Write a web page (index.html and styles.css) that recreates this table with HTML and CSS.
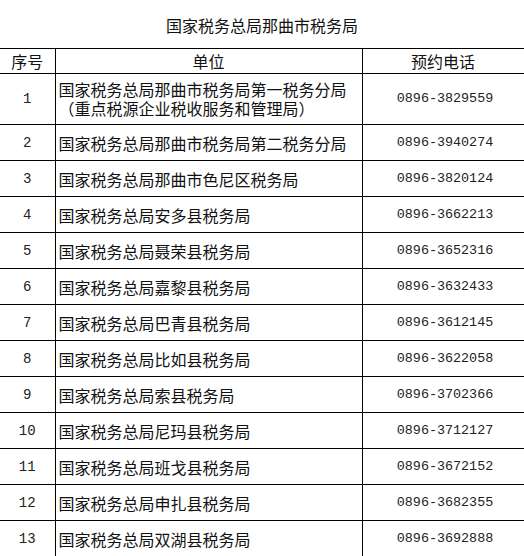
FILE: index.html
```html
<!DOCTYPE html>
<html lang="zh">
<head>
<meta charset="utf-8">
<link rel="stylesheet" href="styles.css">
</head>
<body>
<div class="page">
  <div class="title">国家税务总局那曲市税务局</div>
  <table class="grid">
    <colgroup>
      <col class="c-no">
      <col class="c-name">
      <col class="c-tel">
    </colgroup>
    <thead>
      <tr class="head"><th>序号</th><th>单位</th><th>预约电话</th></tr>
    </thead>
    <tbody>
      <tr class="tall"><td class="no">1</td><td class="name"><span class="ln">国家税务总局那曲市税务局第一税务分局</span><span class="ln">（重点税源企业税收服务和管理局）</span></td><td class="tel">0896-3829559</td></tr>
      <tr><td class="no">2</td><td class="name">国家税务总局那曲市税务局第二税务分局</td><td class="tel">0896-3940274</td></tr>
      <tr><td class="no">3</td><td class="name">国家税务总局那曲市色尼区税务局</td><td class="tel">0896-3820124</td></tr>
      <tr><td class="no">4</td><td class="name">国家税务总局安多县税务局</td><td class="tel">0896-3662213</td></tr>
      <tr><td class="no">5</td><td class="name">国家税务总局聂荣县税务局</td><td class="tel">0896-3652316</td></tr>
      <tr><td class="no">6</td><td class="name">国家税务总局嘉黎县税务局</td><td class="tel">0896-3632433</td></tr>
      <tr><td class="no">7</td><td class="name">国家税务总局巴青县税务局</td><td class="tel">0896-3612145</td></tr>
      <tr><td class="no">8</td><td class="name">国家税务总局比如县税务局</td><td class="tel">0896-3622058</td></tr>
      <tr><td class="no">9</td><td class="name">国家税务总局索县税务局</td><td class="tel">0896-3702366</td></tr>
      <tr><td class="no">10</td><td class="name">国家税务总局尼玛县税务局</td><td class="tel">0896-3712127</td></tr>
      <tr><td class="no">11</td><td class="name">国家税务总局班戈县税务局</td><td class="tel">0896-3672152</td></tr>
      <tr><td class="no">12</td><td class="name">国家税务总局申扎县税务局</td><td class="tel">0896-3682355</td></tr>
      <tr><td class="no">13</td><td class="name">国家税务总局双湖县税务局</td><td class="tel">0896-3692888</td></tr>
    </tbody>
  </table>
</div>
</body>
</html>
```

FILE: styles.css
```css
html, body {
  margin: 0;
  padding: 0;
  background: #fff;
}
body {
  font-family: "Noto Sans CJK SC", "Noto Sans", sans-serif;
  color: #111;
  width: 524px;
  overflow: hidden;
}
.page {
  width: 524px;
}
.title {
  height: 48px;
  display: flex;
  align-items: center;
  justify-content: center;
  font-size: 16px;
  padding-top: 1px;
  box-sizing: border-box;
}
.grid {
  border-collapse: collapse;
  table-layout: fixed;
  width: 524px;
}
.c-no { width: 55px; }
.c-name { width: 307px; }
.c-tel { width: 162px; }
.grid th,
.grid td {
  border: 1px solid #000;
  padding: 0;
  font-weight: normal;
  font-size: 16px;
  line-height: 20px;
  vertical-align: middle;
}
.grid th:first-child,
.grid td:first-child {
  border-left: none;
}
.head {
  height: 25px;
}
.head th {
  text-align: center;
  line-height: 22px;
}
.grid tbody tr {
  height: 36px;
}
.grid tbody tr.tall {
  height: 51px;
}
.grid td.no {
  text-align: center;
  font-family: "Liberation Mono", monospace;
  font-size: 14px;
  color: #222;
}
.grid td.name {
  text-align: left;
  padding-left: 3px;
  white-space: nowrap;
}
.ln {
  display: block;
  line-height: 19px;
}
.grid td.tel {
  text-align: center;
  font-family: "Liberation Mono", monospace;
  font-size: 13.4px;
  color: #222;
  padding-left: 4px;
}
```
